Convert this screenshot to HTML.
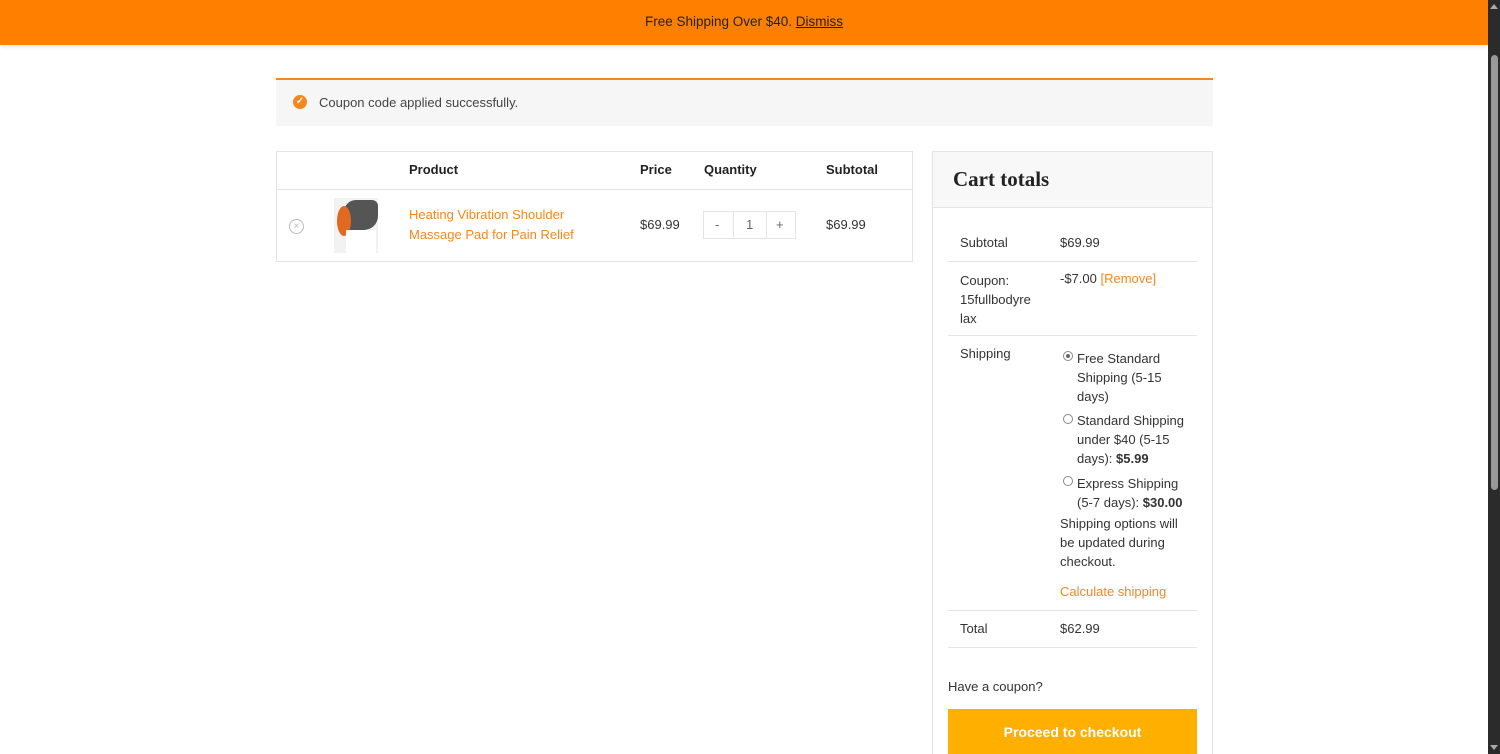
<!DOCTYPE html>
<html style="overflow:hidden;height:754px"><head><meta charset="utf-8"><style>
*{margin:0;padding:0;box-sizing:border-box}
body{width:1500px;height:754px;overflow:hidden;background:#fff;font-family:"Liberation Sans",sans-serif;font-size:13px;color:#333;position:relative}
.a{position:absolute;white-space:nowrap}
.or{color:#f7871d}
.sb{position:absolute;left:1488px;top:0;width:12px;height:754px;background:#2b2b2b}
.thumb{position:absolute;left:1491px;top:55px;width:7px;height:435px;background:#9a9a9a;border-radius:4px}
.line{position:absolute;height:1px;background:#e4e4e4}
</style></head><body>
<div class="a" style="left:0;top:0;width:1488px;height:45px;background:#ff8000;box-shadow:0 2px 4px rgba(0,0,0,.1)"></div>
<div class="a" style="left:0;top:14px;width:1488px;text-align:center;font-size:13.5px;color:#222">Free Shipping Over $40. <span style="text-decoration:underline">Dismiss</span></div>
<div class="sb"></div><div class="thumb"></div>
<div class="a" style="left:1490px;top:4px;width:0;height:0;border:4px solid transparent;border-bottom:5px solid #aaa;border-top:0"></div>
<div class="a" style="left:1490px;top:745px;width:0;height:0;border:4px solid transparent;border-top:5px solid #aaa;border-bottom:0"></div>

<div class="a" style="left:276px;top:78px;width:937px;height:48px;background:#f6f6f6;border-top:2px solid #f7871d"></div>
<div class="a" style="left:293px;top:95px;width:14px;height:14px;border-radius:50%;background:#f7871d;color:#fff;font-size:10px;line-height:14px;text-align:center;font-weight:bold">✓</div>
<div class="a" style="left:319px;top:95px;color:#444">Coupon code applied successfully.</div>

<div class="a" style="left:276px;top:151px;width:637px;height:111px;border:1px solid #e4e4e4"></div>
<div class="line" style="left:277px;top:189px;width:635px"></div>
<div class="a" style="left:409px;top:162px;font-weight:bold;color:#222">Product</div>
<div class="a" style="left:640px;top:162px;font-weight:bold;color:#222">Price</div>
<div class="a" style="left:704px;top:162px;font-weight:bold;color:#222">Quantity</div>
<div class="a" style="left:826px;top:162px;font-weight:bold;color:#222">Subtotal</div>
<div class="a" style="left:289px;top:219px;width:15px;height:15px;border:1px solid #bbb;border-radius:50%;color:#bbb;font-size:10px;line-height:13px;text-align:center">×</div>
<div class="a" style="left:334px;top:198px;width:44px;height:55px;background:#f2f2f2"></div>
<div class="a" style="left:344px;top:200px;width:34px;height:30px;background:#555;border-radius:12px 6px 14px 4px"></div>
<div class="a" style="left:337px;top:206px;width:14px;height:30px;background:#e06a20;border-radius:50%"></div>
<div class="a" style="left:346px;top:230px;width:30px;height:23px;background:#fff"></div>
<div class="a" style="left:409px;top:205px;line-height:20px;white-space:normal;width:180px" ><span class="or">Heating Vibration Shoulder Massage Pad for Pain Relief</span></div>
<div class="a" style="left:640px;top:217px">$69.99</div>
<div class="a" style="left:703px;top:211px;width:93px;height:28px;border:1px solid #e4e4e4"></div>
<div class="line" style="left:733px;top:212px;width:1px;height:26px"></div>
<div class="line" style="left:766px;top:212px;width:1px;height:26px"></div>
<div class="a" style="left:715px;top:217px;color:#666">-</div>
<div class="a" style="left:746px;top:217px;color:#666">1</div>
<div class="a" style="left:776px;top:217px;color:#666">+</div>
<div class="a" style="left:826px;top:217px">$69.99</div>

<div class="a" style="left:932px;top:151px;width:281px;height:610px;border:1px solid #e4e4e4"></div>
<div class="a" style="left:933px;top:152px;width:279px;height:56px;background:#f8f8f8;border-bottom:1px solid #e4e4e4"></div>
<div class="a" style="left:953px;top:167px;font-family:'Liberation Serif',serif;font-size:21px;font-weight:bold;color:#222">Cart totals</div>
<div class="a" style="left:960px;top:235px">Subtotal</div>
<div class="a" style="left:1060px;top:235px">$69.99</div>
<div class="line" style="left:948px;top:261px;width:249px"></div>
<div class="a" style="left:960px;top:271px;line-height:19px">Coupon:<br>15fullbodyre<br>lax</div>
<div class="a" style="left:1060px;top:271px">-$7.00 <span class="or">[Remove]</span></div>
<div class="line" style="left:948px;top:335px;width:249px"></div>
<div class="a" style="left:960px;top:346px">Shipping</div>
<div class="a" style="left:1063px;top:351px;width:10px;height:10px;border:1px solid #888;border-radius:50%"><div style="margin:2px;width:4px;height:4px;border-radius:50%;background:#666"></div></div>
<div class="a" style="left:1077px;top:349px;line-height:19px">Free Standard<br>Shipping (5-15<br>days)</div>
<div class="a" style="left:1063px;top:414px;width:10px;height:10px;border:1px solid #888;border-radius:50%"></div>
<div class="a" style="left:1077px;top:411px;line-height:19px">Standard Shipping<br>under $40 (5-15<br>days): <b>$5.99</b></div>
<div class="a" style="left:1063px;top:476px;width:10px;height:10px;border:1px solid #888;border-radius:50%"></div>
<div class="a" style="left:1077px;top:474px;line-height:19px">Express Shipping<br>(5-7 days): <b>$30.00</b></div>
<div class="a" style="left:1060px;top:514px;line-height:19px">Shipping options will<br>be updated during<br>checkout.</div>
<div class="a or" style="left:1060px;top:584px">Calculate shipping</div>
<div class="line" style="left:948px;top:610px;width:249px"></div>
<div class="a" style="left:960px;top:621px">Total</div>
<div class="a" style="left:1060px;top:621px">$62.99</div>
<div class="line" style="left:948px;top:647px;width:249px"></div>
<div class="a" style="left:948px;top:679px">Have a coupon?</div>
<div class="a" style="left:948px;top:709px;width:249px;height:45px;background:#ffaf00;color:#fff;font-weight:bold;font-size:14px;text-align:center;line-height:46px">Proceed to checkout</div>
</body></html>
